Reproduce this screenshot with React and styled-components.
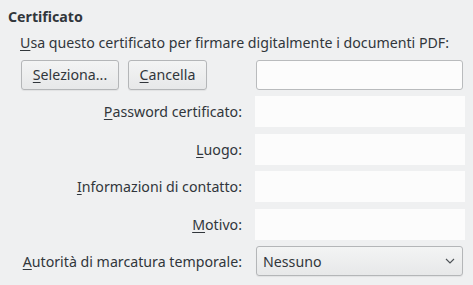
import React from "react"
import styled, { createGlobalStyle } from "styled-components"

const Global = createGlobalStyle`
  html, body {
    margin: 0;
    padding: 0;
    background: #eff0f1;
  }
  body {
    font-family: "Noto Sans", "Open Sans", sans-serif;
    font-size: 14.2px;
    color: #31363b;
  }
`

const Frame = styled.div`
  width: 473px;
  height: 285px;
  box-sizing: border-box;
  padding: 8px 8px 0 8px;
  background: #eff0f1;
`

const Title = styled.div`
  font-weight: bold;
  line-height: 18px;
`

const Section = styled.div`
  padding-left: 12px;
`

const Intro = styled.div`
  line-height: 18px;
  margin-top: 8px;
`

const Grid = styled.div`
  display: grid;
  grid-template-columns: 235px 210px;
  grid-auto-rows: 31px;
  row-gap: 6.4px;
  margin-top: 7px;
`

const Label = styled.label`
  display: flex;
  align-items: center;
  justify-content: flex-end;
  padding-right: 13px;
  white-space: nowrap;
`

const Key = styled.span`
  text-decoration: underline;
  text-underline-offset: 2px;
  text-decoration-thickness: 1px;
`

const Buttons = styled.div`
  display: flex;
  align-items: center;
  gap: 9px;
  padding-left: 1px;
`

const Button = styled.button`
  height: 30px;
  width: ${p => p.$w}px;
  box-sizing: border-box;
  border: 1px solid #b4b6b8;
  border-radius: 3px;
  background: linear-gradient(#f3f4f4, #e7e8e9);
  font: inherit;
  color: #31363b;
  padding: 0;
  box-shadow: 0 1px 1px rgba(0, 0, 0, 0.06);
`

const Field = styled.div`
  align-self: center;
  height: 30px;
  box-sizing: border-box;
  margin: 0 2px 0 1px;
  border: 1px solid #b9bbbd;
  border-radius: 3px;
  background: #fcfcfc;
`

const Disabled = styled.div`
  background: #fcfcfc;
`

const Select = styled.div`
  align-self: center;
  height: 30px;
  box-sizing: border-box;
  margin: 0 2px 0 1px;
  border: 1px solid #b4b6b8;
  border-radius: 3px;
  background: linear-gradient(#f3f4f4, #e7e8e9);
  display: flex;
  align-items: center;
  justify-content: space-between;
  padding: 0 7px 0 6px;
  box-shadow: 0 1px 1px rgba(0, 0, 0, 0.06);
`

const Chevron = () => (
  <svg width="10" height="6" viewBox="0 0 10 6">
    <path d="M1 1 L5 5 L9 1" fill="none" stroke="#4d5257" strokeWidth="1.1" />
  </svg>
)

const rows = [
  ["P", "assword certificato:"],
  ["L", "uogo:"],
  ["I", "nformazioni di contatto:"],
  ["M", "otivo:"],
]

export default function App() {
  return (
    <Frame>
      <Global />
      <Title>Certificato</Title>
      <Section>
        <Intro><Key>U</Key>sa questo certificato per firmare digitalmente i documenti PDF:</Intro>
        <Grid>
          <Buttons>
            <Button $w={98}><Key>S</Key>eleziona...</Button>
            <Button $w={79}><Key>C</Key>ancella</Button>
          </Buttons>
          <Field />
          {rows.map(([k, rest]) => (
            <React.Fragment key={k}>
              <Label><Key>{k}</Key>{rest}</Label>
              <Disabled />
            </React.Fragment>
          ))}
          <Label><Key>A</Key>utorità di marcatura temporale:</Label>
          <Select>
            <span>Nessuno</span>
            <Chevron />
          </Select>
        </Grid>
      </Section>
    </Frame>
  )
}
